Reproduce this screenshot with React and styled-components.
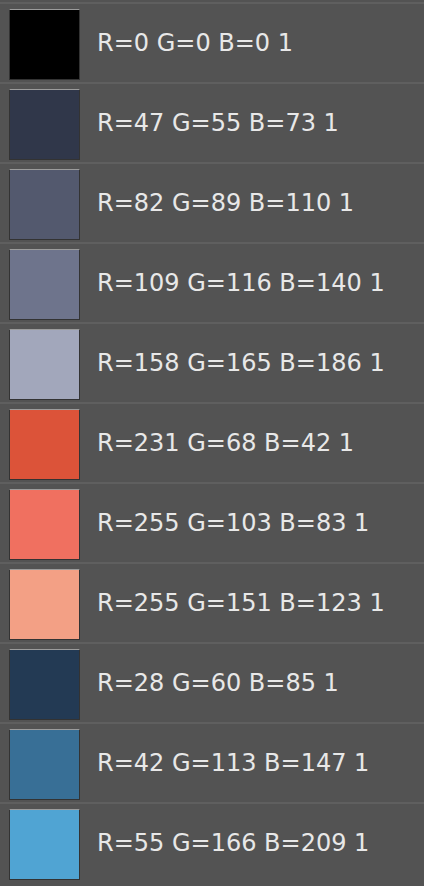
import React from 'react';
import styled, { createGlobalStyle } from 'styled-components';

const GlobalStyle = createGlobalStyle`
  html, body {
    margin: 0;
    padding: 0;
    background: #535353;
  }
`;

// label values plus the colour as it shows on screen (colour-managed)
const swatches = [
  { rgb: [0, 0, 0], shown: '#000000' },
  { rgb: [47, 55, 73], shown: '#30374a' },
  { rgb: [82, 89, 110], shown: '#53596e' },
  { rgb: [109, 116, 140], shown: '#6e748c' },
  { rgb: [158, 165, 186], shown: '#a2a7bb' },
  { rgb: [231, 68, 42], shown: '#dc5339' },
  { rgb: [255, 103, 83], shown: '#f07060' },
  { rgb: [255, 151, 123], shown: '#f3a085' },
  { rgb: [28, 60, 85], shown: '#233a54' },
  { rgb: [42, 113, 147], shown: '#386f96' },
  { rgb: [55, 166, 209], shown: '#50a4d3' },
];

const Panel = styled.div`
  width: 424px;
  height: 886px;
  overflow: hidden;
  background: #535353;
  padding-top: 2px;
  box-sizing: border-box;
  font-family: 'DejaVu Sans', 'Liberation Sans', sans-serif;
`;

const Row = styled.div`
  display: flex;
  align-items: center;
  gap: 17px;
  height: 78px;
  padding-left: 9px;
  border-top: 2px solid #5f5f5f;
`;

const Swatch = styled.div`
  width: 69px;
  height: 69px;
  flex: none;
  border: 1px solid #333;
  border-top-color: #9c9c9c;
  margin-top: 2px;
  background: ${({ $color }) => $color};
`;

const Label = styled.span`
  color: #e8e8e8;
  font-size: 24px;
  white-space: nowrap;
`;

const App = () => (
  <>
    <GlobalStyle />
    <Panel>
      {swatches.map(({ rgb: [r, g, b], shown }) => (
        <Row key={shown}>
          <Swatch $color={shown} />
          <Label>{`R=${r} G=${g} B=${b} 1`}</Label>
        </Row>
      ))}
    </Panel>
  </>
);

export default App;
